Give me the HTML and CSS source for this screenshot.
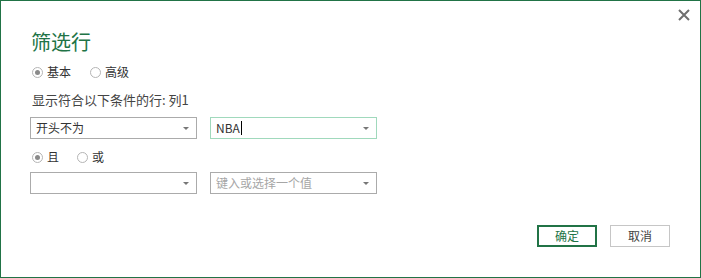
FILE: index.html
```html
<!DOCTYPE html>
<html lang="zh-CN">
<head>
<meta charset="utf-8">
<link rel="stylesheet" href="styles.css">
</head>
<body>
<div class="dialog">
  <button class="close" aria-label="关闭">
    <svg width="12" height="12" viewBox="0 0 12 12"><path d="M1 1 L11 11 M11 1 L1 11" stroke="#6f6f6f" stroke-width="2"/></svg>
  </button>
  <h1 class="title">筛选行</h1>
  <div class="radios top-radios">
    <label class="radio"><span class="dot checked"></span>基本</label>
    <label class="radio"><span class="dot"></span>高级</label>
  </div>
  <div class="desc">显示符合以下条件的行: 列1</div>
  <div class="row row-first">
    <div class="select"><span class="val">开头不为</span><span class="arrow"></span></div>
    <div class="select focus"><span class="val">NBA<span class="caret"></span></span><span class="arrow"></span></div>
  </div>
  <div class="radios mid-radios">
    <label class="radio"><span class="dot checked"></span>且</label>
    <label class="radio"><span class="dot"></span>或</label>
  </div>
  <div class="row row-second">
    <div class="select"><span class="val"></span><span class="arrow"></span></div>
    <div class="select"><span class="val placeholder">键入或选择一个值</span><span class="arrow"></span></div>
  </div>
  <div class="footer">
    <button class="btn primary">确定</button>
    <button class="btn">取消</button>
  </div>
</div>
</body>
</html>
```

FILE: styles.css
```css
* { box-sizing: border-box; }
html, body { margin: 0; padding: 0; background: #fff; }
body {
  font-family: "Noto Sans CJK SC", "Noto Sans", sans-serif;
  font-size: 12px;
  color: #444;
}
.dialog {
  position: relative;
  width: 701px;
  height: 278px;
  border: 1px solid #217346;
  padding: 0 0 0 29px;
}
.close {
  position: absolute;
  top: 8px;
  right: 10px;
  width: 12px;
  height: 12px;
  padding: 0;
  border: 0;
  background: none;
  display: block;
}
.close svg { display: block; }
.title {
  margin: 26px 0 0 1px;
  font-size: 20px;
  font-weight: normal;
  line-height: 30px;
  color: #217346;
}
.radios {
  display: flex;
  height: 20px;
  align-items: center;
}
.top-radios { margin-top: 5px; }
.top-radios .radio:first-child { width: 58px; }
.mid-radios { margin-top: 8px; }
.mid-radios .radio:first-child { width: 45px; }
.radio {
  display: flex;
  align-items: center;
  color: #333;
  font-size: 12px;
  line-height: 16px;
}
.dot {
  width: 11px;
  height: 11px;
  border: 1px solid #b5b5b5;
  border-radius: 50%;
  margin: 0 4px 0 2px;
  position: relative;
  background: #fff;
}
.dot.checked::after {
  content: "";
  position: absolute;
  left: 2px;
  top: 2px;
  width: 5px;
  height: 5px;
  border-radius: 50%;
  background: #8a8a8a;
}
.desc {
  margin-top: 9px;
  font-size: 13px;
  line-height: 17px;
  color: #444;
  padding-left: 2px;
}
.row {
  display: flex;
  gap: 13px;
}
.row-first { margin-top: 9px; }
.row-second { margin-top: 5px; }
.select {
  width: 167px;
  height: 22px;
  border: 1px solid #ababab;
  display: flex;
  align-items: center;
  justify-content: space-between;
  padding: 0 7px 0 5px;
  color: #333;
}
.select.focus { border-color: #a0d9bc; }
.val { display: flex; align-items: center; line-height: 16px; }
.placeholder { color: #a6a6a6; }
.caret {
  display: inline-block;
  width: 1px;
  height: 14px;
  background: #000;
  margin-left: 1px;
}
.arrow {
  width: 0;
  height: 0;
  border-left: 3px solid transparent;
  border-right: 3px solid transparent;
  border-top: 3px solid #777;
}
.footer {
  display: flex;
  justify-content: flex-end;
  gap: 13px;
  margin-top: 31px;
  padding-right: 30px;
}
.btn {
  width: 60px;
  height: 22px;
  border: 1px solid #c6c6c6;
  background: #fff;
  font-family: "Noto Sans CJK SC", "Noto Sans", sans-serif;
  font-size: 12px;
  color: #444;
  padding: 0;
  line-height: 18px;
}
.btn.primary {
  border: 2px solid #217346;
  color: #217346;
}
```
